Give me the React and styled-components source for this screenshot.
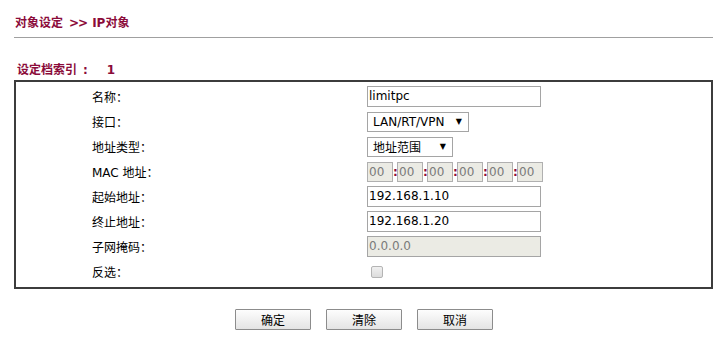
import React from 'react';
import styled, { createGlobalStyle } from 'styled-components';

const GlobalStyle = createGlobalStyle`
	html, body {
		margin: 0;
		padding: 0;
		background: #fff;
	}
	body {
		font-family: "DejaVu Sans", "Noto Sans CJK SC", sans-serif;
		font-size: 12px;
		color: #000;
	}
`;

const Page = styled.div`
	width: 726px;
	height: 354px;
	padding: 0 13px 0 14px;
	box-sizing: border-box;
	overflow: hidden;
`;

const PageTitle = styled.div`
	padding: 15px 0 6px 1px;
	line-height: 16px;
	font-weight: 700;
	color: #8b0b3a;
	border-bottom: 1px solid #a0a0a0;

	span {
		margin: 0 5px 0 6px;
		letter-spacing: -1px;
	}
`;

const SectionTitle = styled.div`
	display: flex;
	align-items: center;
	margin-top: 24px;
	margin-bottom: 2px;
	padding-left: 3px;
	line-height: 16px;
	font-weight: 700;
	color: #8b0b3a;
`;

const IndexSep = styled.span`
	margin: 0 0 0 6px;
`;

const IndexValue = styled.span`
	margin-left: 19px;
`;

const FormBox = styled.div`
	border: 2px solid #3c3c3c;
	padding: 2px 0 3px;
`;

const Row = styled.div`
	display: grid;
	grid-template-columns: 351px 1fr;
	align-items: center;
	height: 25px;
`;

const Label = styled.div`
	padding-left: 76px;
	white-space: pre;
`;

const TextInput = styled.div`
	width: 171px;
	height: 19px;
	line-height: 19px;
	padding-left: 1px;
	box-sizing: content-box;
	border: 1px solid #a5a5a5;
	background: ${(p) => (p.disabled ? '#ebebe4' : '#fff')};
	color: ${(p) => (p.disabled ? '#7a7a7a' : '#000')};
`;

const SelectBox = styled.div`
	display: flex;
	align-items: center;
	justify-content: space-between;
	width: ${(p) => p.width}px;
	height: 20px;
	box-sizing: border-box;
	padding: 0 6px 0 5px;
	border: 1px solid #a5a5a5;
	background: #fff;
`;

const Arrow = styled.span`
	font-size: 8px;
	line-height: 1;
`;

const MacGroup = styled.div`
	display: flex;
	align-items: center;
`;

const MacField = styled.div`
	width: 23px;
	height: 18px;
	line-height: 18px;
	padding-left: 1px;
	box-sizing: content-box;
	border: 1px solid #b0b0b0;
	background: #ebebe4;
	color: #7a7a7a;
`;

const Colon = styled.span`
	width: 4px;
	text-align: center;
	font-weight: 700;
	color: #8b0b3a;
`;

const CheckBox = styled.span`
	display: block;
	width: 10px;
	height: 10px;
	margin-left: 4px;
	border: 1px solid #b4b4b4;
	border-radius: 2px;
	background: linear-gradient(#f0f0f0, #dcdcdc);
`;

const ButtonRow = styled.div`
	display: flex;
	justify-content: center;
	gap: 15px;
	margin-top: 20px;
	padding-left: 1px;
`;

const Button = styled.button`
	width: 76px;
	height: 21px;
	padding: 0;
	font-family: "DejaVu Sans", "Noto Sans CJK SC", sans-serif;
	font-size: 12px;
	color: #000;
	border: 1px solid #8c8c8c;
	border-radius: 1px;
	background: linear-gradient(#fdfdfd, #e4e4e4);
`;

const macParts = ['00', '00', '00', '00', '00', '00'];

const App = () => {
	return (
		<Page>
			<GlobalStyle />
			<PageTitle>
				对象设定<span>&gt;&gt;</span>IP对象
			</PageTitle>
			<SectionTitle>
				设定档索引<IndexSep>:</IndexSep>
				<IndexValue>1</IndexValue>
			</SectionTitle>
			<FormBox>
				<Row>
					<Label>名称：</Label>
					<TextInput>limitpc</TextInput>
				</Row>
				<Row>
					<Label>接口：</Label>
					<SelectBox width={102}>
						<span>LAN/RT/VPN</span>
						<Arrow>▼</Arrow>
					</SelectBox>
				</Row>
				<Row>
					<Label>地址类型：</Label>
					<SelectBox width={86}>
						<span>地址范围</span>
						<Arrow>▼</Arrow>
					</SelectBox>
				</Row>
				<Row>
					<Label>MAC 地址：</Label>
					<MacGroup>
						{macParts.map((part, i) => (
							<React.Fragment key={i}>
								{i > 0 && <Colon>:</Colon>}
								<MacField>{part}</MacField>
							</React.Fragment>
						))}
					</MacGroup>
				</Row>
				<Row>
					<Label>起始地址：</Label>
					<TextInput>192.168.1.10</TextInput>
				</Row>
				<Row>
					<Label>终止地址：</Label>
					<TextInput>192.168.1.20</TextInput>
				</Row>
				<Row>
					<Label>子网掩码：</Label>
					<TextInput disabled>0.0.0.0</TextInput>
				</Row>
				<Row>
					<Label>反选：</Label>
					<CheckBox />
				</Row>
			</FormBox>
			<ButtonRow>
				<Button>确定</Button>
				<Button>清除</Button>
				<Button>取消</Button>
			</ButtonRow>
		</Page>
	);
};

export default App;
